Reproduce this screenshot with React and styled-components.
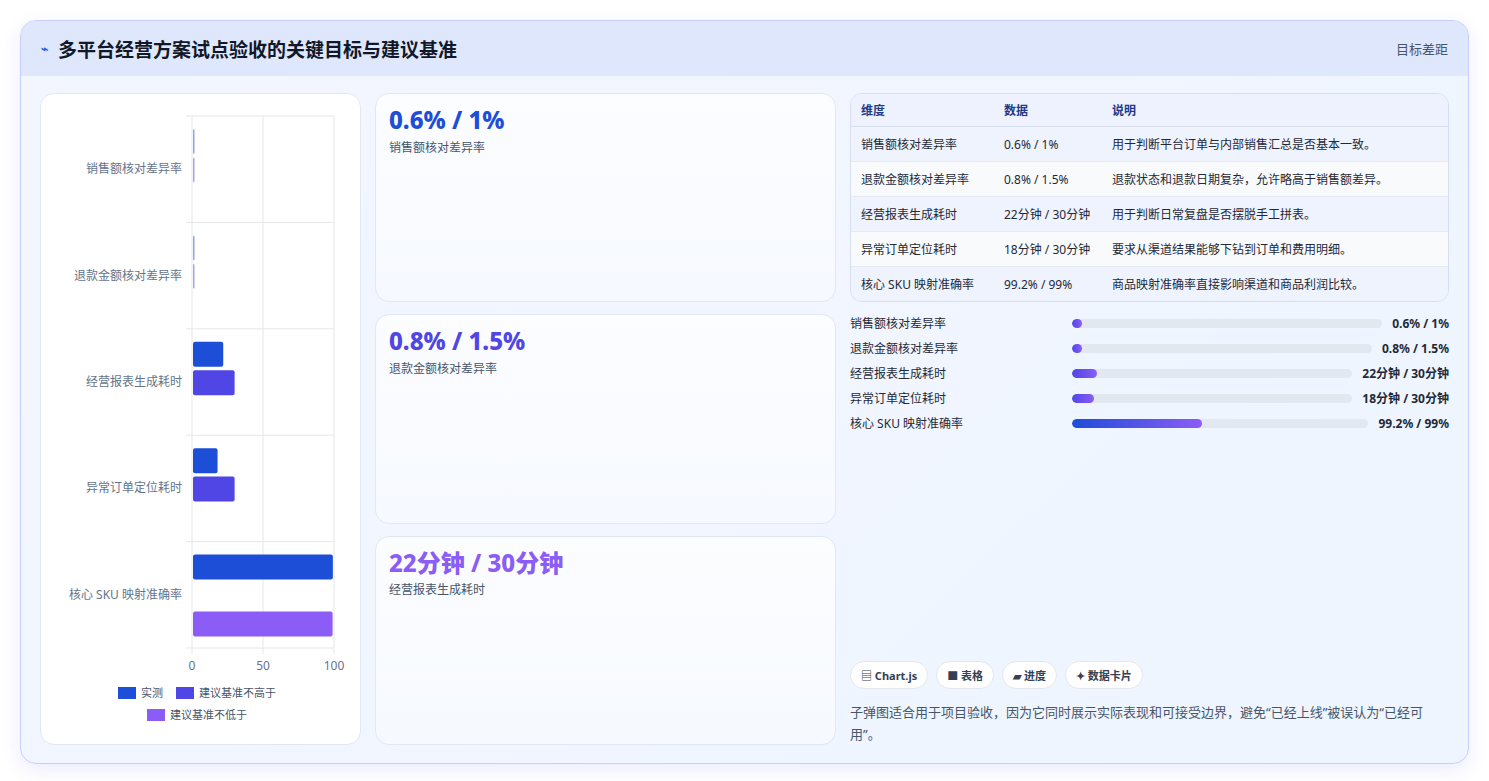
import React from "react";
import styled, { createGlobalStyle } from "styled-components";

const Global = createGlobalStyle`
  body { margin: 0; background: #fff; font-family: "Noto Sans", "Noto Sans CJK SC", sans-serif; }
`;
const Page = styled.div`padding: 20px 20px 18px 20px;`;
const Frame = styled.div`
  border: 1px solid #c7cffa; border-radius: 16px; overflow: hidden;
  background: linear-gradient(135deg, #f3f6ff, #eef5ff);
  box-shadow: 0 6px 18px rgba(99,102,241,0.12);
`;
const Header = styled.div`
  height: 55px; display: flex; align-items: center; justify-content: space-between;
  padding: 0 20px; background: #dfe7fd;
`;
const Title = styled.h1`
  margin: 0; font-size: 19px; font-weight: 700; color: #111827; display: flex; align-items: center; gap: 10px;
`;
const Glyph = styled.span`color: #2563eb; font-size: 12px;`;
const Meta = styled.span`font-size: 13px; color: #475569;`;
const Body = styled.div`
  display: grid; grid-template-columns: 321px 461px 1fr; gap: 14px; padding: 17px 19px 18px 19px; height: 652px;
`;
const Panel = styled.div`
  background: #fff; border: 1px solid #e2e8f0; border-radius: 14px; box-sizing: border-box;
`;
const Cards = styled.div`display: grid; grid-template-rows: repeat(3, 1fr); gap: 12px;`;
const Card = styled(Panel)`
  background: linear-gradient(180deg, #fcfdff, #f6f9ff); padding: 12px 13px;
`;
const Big = styled.div`font-size: 24px; font-weight: 800; color: ${p => p.$c}; line-height: 1.15;`;
const Sub = styled.div`font-size: 12px; color: #475569; margin-top: 4px;`;
const Right = styled.div`display: flex; flex-direction: column; min-width: 0;`;
const Table = styled.table`
  width: 100%; border-collapse: separate; border-spacing: 0; border: 1px solid #d7def0; border-radius: 12px; overflow: hidden;
  font-size: 12px; color: #1f2937;
  th { text-align: left; font-weight: 700; color: #1e3a8a; background: #eef2ff; height: 32px; padding: 0 10px; border-bottom: 1px solid #d7def0; }
  td { height: 34px; padding: 0 10px; border-bottom: 1px solid #e5eaf5; }
  tr:last-child td { border-bottom: none; }
  tbody tr:nth-child(odd) td { background: #eef3fe; }
  tbody tr:nth-child(even) td { background: #f8fafc; }
`;
const Bars = styled.div`display: flex; flex-direction: column; gap: 7px; margin-top: 12px;`;
const BarRow = styled.div`display: flex; align-items: center; gap: 10px; font-size: 12px; color: #1f2937; height: 18px;`;
const BarLabel = styled.span`width: 212px; flex: none;`;
const Track = styled.div`flex: 1; height: 9px; border-radius: 5px; background: #e2e8f0; overflow: hidden;`;
const Fill = styled.div`
  height: 100%; border-radius: 5px; min-width: 10px;
  background: linear-gradient(90deg, ${p => p.$from}, #8b5cf6);
`;
const BarVal = styled.span`font-weight: 700; white-space: nowrap;`;
const Spacer = styled.div`flex: 1;`;
const Chips = styled.div`display: flex; gap: 8px;`;
const Chip = styled.span`
  background: #fff; border: 1px solid #e5e7eb; border-radius: 999px; padding: 5px 10px; font-size: 11px; font-weight: 700; color: #334155;
`;
const Note = styled.p`margin: 12px 0 0; font-size: 13px; line-height: 22px; color: #475569;`;

const cats = ["销售额核对差异率", "退款金额核对差异率", "经营报表生成耗时", "异常订单定位耗时", "核心 SKU 映射准确率"];
const data = [[0.6, 1, null], [0.8, 1.5, null], [22, 30, null], [18, 30, null], [99.2, null, 99]];
const colors = ["#1d4ed8", "#4f46e5", "#8b5cf6"];

function Chart() {
  const x0 = 151, w = 142, top = 22, band = 106.4;
  const X = v => x0 + (v / 100) * w;
  return (
    <svg width="320" height="650" style={{ display: "block" }} fontFamily="Noto Sans, Noto Sans CJK SC, sans-serif">
      {[0, 50, 100].map(v => <line key={v} x1={X(v)} x2={X(v)} y1={top} y2={top + band * 5 + 6} stroke="#e5e7eb" />)}
      {[0, 1, 2, 3, 4, 5].map(i => <line key={i} x1={x0 - 6} x2={x0 + w} y1={top + band * i} y2={top + band * i} stroke="#e5e7eb" />)}
      {cats.map((c, i) => (
        <g key={c}>
          <text x={x0 - 10} y={top + band * i + band / 2 + 4} textAnchor="end" fontSize="12" fill="#64748b">{c}</text>
          {data[i].map((v, j) => v == null ? null : (
            <rect key={j} x={x0 + 1} y={top + band * i + 13 + j * 28.4} width={Math.max(X(v) - x0 - 1, 1.5)} height="25" rx="2" fill={colors[j]} opacity={v < 2 ? 0.5 : 1} />
          ))}
        </g>
      ))}
      {[0, 50, 100].map(v => <text key={v} x={X(v)} y={576} textAnchor="middle" fontSize="12" fill="#64748b">{v}</text>)}
      <g fontSize="11" fill="#475569">
        <rect x="77" y="593" width="18" height="12" fill={colors[0]} /><text x="100" y="603">实测</text>
        <rect x="135" y="593" width="18" height="12" fill={colors[1]} /><text x="158" y="603">建议基准不高于</text>
        <rect x="106" y="615" width="18" height="12" fill={colors[2]} /><text x="129" y="625">建议基准不低于</text>
      </g>
    </svg>
  );
}

const rows = [
  ["销售额核对差异率", "0.6% / 1%", "用于判断平台订单与内部销售汇总是否基本一致。"],
  ["退款金额核对差异率", "0.8% / 1.5%", "退款状态和退款日期复杂，允许略高于销售额差异。"],
  ["经营报表生成耗时", "22分钟 / 30分钟", "用于判断日常复盘是否摆脱手工拼表。"],
  ["异常订单定位耗时", "18分钟 / 30分钟", "要求从渠道结果能够下钻到订单和费用明细。"],
  ["核心 SKU 映射准确率", "99.2% / 99%", "商品映射准确率直接影响渠道和商品利润比较。"],
];
const fills = [3, 3, 9, 8, 44];

export default function App() {
  return (
    <Page>
      <Global />
      <Frame>
        <Header>
          <Title><Glyph>⌁</Glyph>多平台经营方案试点验收的关键目标与建议基准</Title>
          <Meta>目标差距</Meta>
        </Header>
        <Body>
          <Panel><Chart /></Panel>
          <Cards>
            <Card><Big $c="#1d4ed8">0.6% / 1%</Big><Sub>销售额核对差异率</Sub></Card>
            <Card><Big $c="#4f46e5">0.8% / 1.5%</Big><Sub>退款金额核对差异率</Sub></Card>
            <Card><Big $c="#8b5cf6">22分钟 / 30分钟</Big><Sub>经营报表生成耗时</Sub></Card>
          </Cards>
          <Right>
            <Table>
              <thead><tr><th style={{ width: 123 }}>维度</th><th style={{ width: 88 }}>数据</th><th>说明</th></tr></thead>
              <tbody>{rows.map(r => <tr key={r[0]}>{r.map(c => <td key={c}>{c}</td>)}</tr>)}</tbody>
            </Table>
            <Bars>
              {rows.map((r, i) => (
                <BarRow key={r[0]}>
                  <BarLabel>{r[0]}</BarLabel>
                  <Track><Fill $from={i === 4 ? "#1d4ed8" : "#4f46e5"} style={{ width: fills[i] + "%" }} /></Track>
                  <BarVal>{r[1]}</BarVal>
                </BarRow>
              ))}
            </Bars>
            <Spacer />
            <Chips><Chip>▤ Chart.js</Chip><Chip>■ 表格</Chip><Chip>▰ 进度</Chip><Chip>✦ 数据卡片</Chip></Chips>
            <Note>子弹图适合用于项目验收，因为它同时展示实际表现和可接受边界，避免“已经上线”被误认为“已经可用”。</Note>
          </Right>
        </Body>
      </Frame>
    </Page>
  );
}
